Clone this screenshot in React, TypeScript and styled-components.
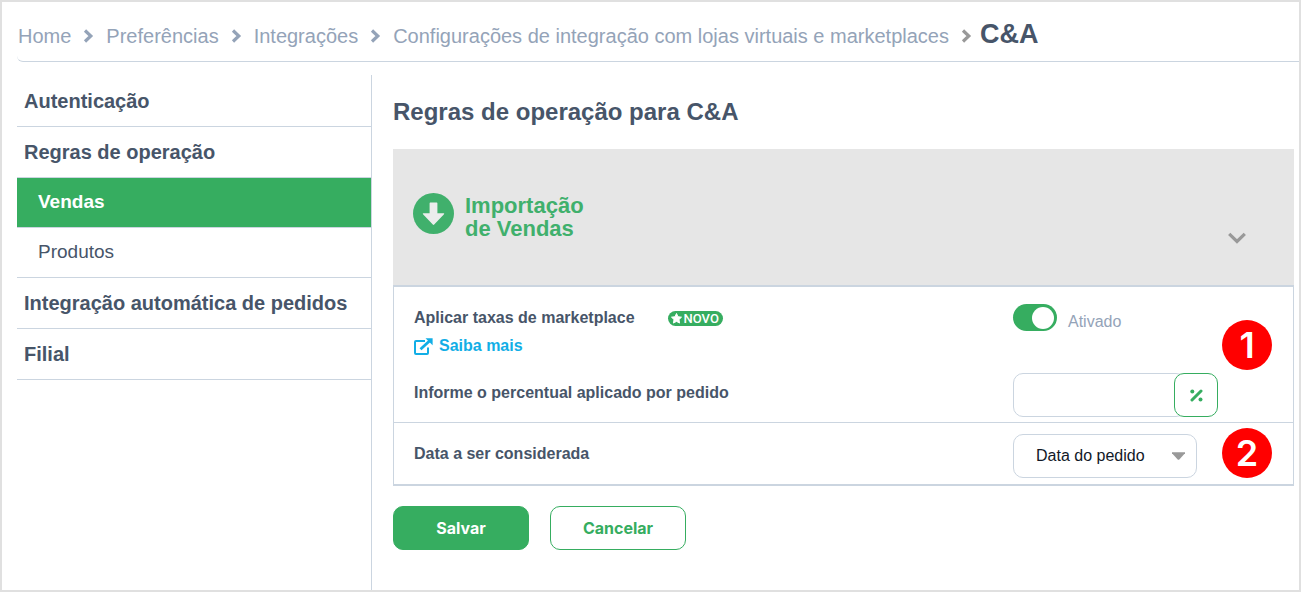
import React from "react";
import styled, { createGlobalStyle, css } from "styled-components";

const green = "#36ad60";
const slate = "#475569";
const muted = "#94a3b8";
const line = "#cbd5e0";

const GlobalStyle = createGlobalStyle`
  *, *::before, *::after { box-sizing: border-box; }
  body {
    margin: 0;
    background: #fff;
    color: ${slate};
    font-family: "Liberation Sans", Arial, sans-serif;
    font-size: 16px;
  }
  a { color: inherit; text-decoration: none; }
  ul, ol { list-style: none; margin: 0; padding: 0; }
  svg { display: block; flex: none; }
`;

const Page = styled.div`
  display: flex;
  flex-direction: column;
  min-height: 100vh;
  margin-right: 1px;
  padding-left: 15px;
  border: 2px solid #e0e0e0;
`;

const Header = styled.header`
  padding: 15px 0 7px 1px;
  border-bottom: 1px solid ${line};
  border-bottom-left-radius: 6px;
`;

const Crumbs = styled.ol`
  display: flex;
  align-items: baseline;
  color: ${muted};
  font-size: 20px;
  line-height: 35px;
  white-space: nowrap;
`;

const Crumb = styled.li`
  display: flex;
  align-items: baseline;
`;

const CrumbArrow = styled.span<{ $last?: boolean }>`
  margin: 0 ${(p) => (p.$last ? 8 : 12)}px 0 12px;
  color: ${(p) => (p.$last ? "#999" : muted)};
`;

const Current = styled.strong`
  color: ${slate};
  font-size: 27px;
`;

const Body = styled.div`
  display: flex;
  flex: 1;
  margin-top: 13px;
`;

const Sidebar = styled.nav`
  flex: none;
  width: 355px;
  padding-top: 1px;
  border-right: 1px solid ${line};
`;

const MenuLink = styled.a<{ $sub?: boolean; $active?: boolean }>`
  display: flex;
  align-items: center;
  height: 51px;
  padding-left: 7px;
  border-bottom: 1px solid ${line};
  font-size: 20px;
  font-weight: bold;
  ${(p) =>
    p.$sub &&
    css`
      height: 50px;
      padding: 0 0 2px 21px;
      font-size: 19px;
      font-weight: normal;
    `}
  ${(p) =>
    p.$active &&
    css`
      background: ${green};
      color: #fff;
      font-weight: bold;
    `}
`;

const Main = styled.main`
  flex: 1;
  min-width: 0;
  padding: 22px 5px 0 21px;
`;

const Title = styled.h1`
  margin: 0 0 22px;
  font-size: 24px;
  line-height: 30px;
`;

const PanelHeader = styled.div`
  display: flex;
  align-items: center;
  justify-content: space-between;
  height: 138px;
  padding: 0 48px 2px 20px;
  background: #e6e6e6;
  border-bottom: 2px solid ${line};
`;

const PanelTitle = styled.h2`
  display: flex;
  align-items: flex-start;
  gap: 11px;
  margin: 0;
  color: #40b06c;
  font-size: 22px;
  line-height: 23px;
`;

const TitleText = styled.span`
  padding-top: 1px;
`;

const Collapse = styled.button`
  align-self: flex-end;
  padding: 0;
  margin-bottom: 39px;
  border: 0;
  background: none;
  color: #999;
`;

const PanelBody = styled.div`
  border: solid ${line};
  border-width: 0 1px 2px;
`;

const Rule = styled.section<{ $roomy?: boolean }>`
  display: flex;
  align-items: center;
  padding: ${(p) => (p.$roomy ? "17px 21px 5px 20px" : "11px 21px 6px 20px")};

  & + & {
    border-top: 1px solid ${line};
  }
`;

const Fields = styled.div`
  flex: 1;
  display: flex;
  flex-direction: column;
  gap: 17px;
`;

const Field = styled.div`
  display: grid;
  grid-template-columns: 1fr 209px;
  align-items: center;
`;

const LabelLine = styled.div`
  display: flex;
  align-items: center;
  padding-bottom: 5px;
  line-height: 20px;
`;

const FeeText = styled.div`
  display: flex;
  flex-direction: column;
  gap: 3px;
  padding-top: 4px;
`;

const Label = styled.label`
  font-weight: bold;
`;

const NewBadge = styled.span`
  display: flex;
  align-items: center;
  gap: 2px;
  height: 15px;
  margin-left: 33px;
  padding: 0 4px 0 3px;
  border-radius: 8px;
  background: ${green};
  color: #fff;
  font: 500 13px/15px Roboto, sans-serif;
`;

const HelpLink = styled.a`
  display: flex;
  align-items: center;
  align-self: flex-start;
  gap: 6px;
  color: #12aee6;
  font-weight: bold;
  line-height: 20px;
`;

const SwitchLine = styled.div`
  display: flex;
  align-self: start;
  gap: 11px;
`;

const Switch = styled.input`
  appearance: none;
  width: 44px;
  height: 27px;
  margin: 0;
  padding: 3px;
  border-radius: 14px;
  background: #9ca3af;

  &::before {
    content: "";
    display: block;
    width: 22px;
    height: 22px;
    border-radius: 50%;
    background: #fff;
  }
  &:checked {
    background: ${green};
  }
  &:checked::before {
    margin-left: 16px;
  }
`;

const SwitchText = styled.label`
  padding-top: 8px;
  color: ${muted};
  line-height: 20px;
`;

const PercentGroup = styled.div`
  display: flex;
  width: 205px;
`;

const PercentInput = styled.input`
  flex: 1;
  min-width: 0;
  height: 44px;
  margin-right: -12px;
  padding: 0 22px 0 12px;
  border: 1px solid ${line};
  border-radius: 10px;
  font: inherit;
`;

const PercentButton = styled.button`
  position: relative;
  display: flex;
  align-items: center;
  justify-content: center;
  width: 44px;
  height: 44px;
  padding: 0;
  border: 1px solid ${green};
  border-radius: 10px;
  background: #fff;
  color: ${green};
`;

const SelectBox = styled.div`
  display: grid;
  align-items: center;
  width: 184px;

  & > * {
    grid-area: 1 / 1;
  }
  & > svg {
    justify-self: end;
    margin-right: 12px;
    pointer-events: none;
  }
`;

const Select = styled.select`
  appearance: none;
  width: 100%;
  height: 44px;
  padding: 0 30px 2px 22px;
  border: 1px solid ${line};
  border-radius: 10px;
  background: #fff;
  color: #111827;
  font: inherit;
`;

const Marker = styled.span<{ $raised?: boolean }>`
  display: flex;
  align-items: center;
  justify-content: center;
  flex: none;
  align-self: ${(p) => (p.$raised ? "flex-start" : "flex-end")};
  width: 50px;
  height: 50px;
  margin-top: ${(p) => (p.$raised ? 16 : -6)}px;
  border-radius: 50%;
  background: #f00;
  color: #fff;
  font: 600 36px/50px Inter, sans-serif;
`;

const Actions = styled.div`
  display: flex;
  gap: 21px;
  margin-top: 20px;
`;

const ActionButton = styled.button<{ $primary?: boolean }>`
  width: 136px;
  height: 44px;
  padding: 0;
  border: 1px solid ${green};
  border-radius: 10px;
  background: ${(p) => (p.$primary ? green : "#fff")};
  color: ${(p) => (p.$primary ? "#fff" : green)};
  font: bold 16px/20px Inter, sans-serif;
`;

const ChevronRight = () => (
  <svg width="11" height="14" viewBox="0 0 11 14" fill="none" aria-hidden="true">
    <path d="M2 1.5 7.8 7 2 12.5" stroke="currentColor" strokeWidth="3.2" />
  </svg>
);

const ChevronDown = () => (
  <svg width="18" height="12" viewBox="0 0 18 12" fill="none" aria-hidden="true">
    <path d="M1.2 1.8 9 9.4 16.8 1.8" stroke="currentColor" strokeWidth="3.2" />
  </svg>
);

const DownloadIcon = () => (
  <svg width="41" height="41" viewBox="0 0 41 41" aria-hidden="true">
    <circle cx="20.5" cy="20.5" r="20.5" fill="currentColor" />
    <path
      d="M17.3 9.6H23.7Q24.4 9.6 24.4 10.3V20.3H30.7Q31.6 20.3 31 21.2L21.2 31.6Q20.5 32.3 19.8 31.6L10 21.2Q9.4 20.3 10.3 20.3H16.6V10.3Q16.6 9.6 17.3 9.6Z"
      fill="#ebedec"
    />
  </svg>
);

const ExternalIcon = () => (
  <svg width="19" height="17" viewBox="0 0 19 17" fill="none" aria-hidden="true">
    <path d="M11 3H2Q1 3 1 4V15Q1 16 2 16H13Q14 16 14 15V9.5" stroke="currentColor" strokeWidth="2" />
    <path d="M6.5 11.3 15.5 3" stroke="currentColor" strokeWidth="2.8" />
    <path d="M11.5.2H18.6V7.3Z" fill="currentColor" />
  </svg>
);

const StarIcon = () => (
  <svg width="11" height="11" viewBox="0 0 24 24" fill="currentColor" aria-hidden="true">
    <path
      d="M12 1l3.4 7 7.6 1.1-5.5 5.3 1.3 7.6L12 18.4 5.2 22l1.3-7.6L1 9.1 8.6 8z"
      stroke="currentColor"
      strokeWidth="2"
      strokeLinejoin="round"
    />
  </svg>
);

const PercentIcon = () => (
  <svg width="13" height="13" viewBox="0 0 13 13" fill="currentColor" aria-hidden="true">
    <circle cx="2.3" cy="2.5" r="2" />
    <circle cx="10.5" cy="10.5" r="2" />
    <path d="M2 11 11 2" stroke="currentColor" strokeWidth="3" strokeLinecap="round" />
  </svg>
);

const Caret = () => (
  <svg width="13" height="8" viewBox="0 0 13 8" aria-hidden="true">
    <path d="M0 .3H13V1.2L7.3 7.4Q6.5 8 5.7 7.4L0 1.2Z" fill="#999" />
  </svg>
);

const crumbs = [
  "Home",
  "Preferências",
  "Integrações",
  "Configurações de integração com lojas virtuais e marketplaces",
];

const menu = [
  { text: "Autenticação" },
  { text: "Regras de operação" },
  { text: "Vendas", sub: true, active: true },
  { text: "Produtos", sub: true },
  { text: "Integração automática de pedidos" },
  { text: "Filial" },
];

export default function App() {
  return (
    <>
      <GlobalStyle />
      <Page>
        <Header>
          <Crumbs>
            {crumbs.map((text, i) => (
              <Crumb key={text}>
                <a href="#">{text}</a>
                <CrumbArrow $last={i === crumbs.length - 1}>
                  <ChevronRight />
                </CrumbArrow>
              </Crumb>
            ))}
            <Crumb aria-current="page">
              <Current>C&amp;A</Current>
            </Crumb>
          </Crumbs>
        </Header>
        <Body>
          <Sidebar>
            <ul>
              {menu.map((item) => (
                <li key={item.text}>
                  <MenuLink href="#" $sub={item.sub} $active={item.active}>
                    {item.text}
                  </MenuLink>
                </li>
              ))}
            </ul>
          </Sidebar>
          <Main>
            <Title>Regras de operação para C&amp;A</Title>
            <PanelHeader>
              <PanelTitle>
                <DownloadIcon />
                <TitleText>
                  Importação
                  <br />
                  de Vendas
                </TitleText>
              </PanelTitle>
              <Collapse type="button" aria-label="Recolher">
                <ChevronDown />
              </Collapse>
            </PanelHeader>
            <PanelBody>
              <Rule $roomy>
                <Fields>
                  <Field>
                    <FeeText>
                      <LabelLine>
                        <Label htmlFor="fees">Aplicar taxas de marketplace</Label>
                        <NewBadge>
                          <StarIcon />
                          NOVO
                        </NewBadge>
                      </LabelLine>
                      <HelpLink href="#">
                        <ExternalIcon />
                        Saiba mais
                      </HelpLink>
                    </FeeText>
                    <SwitchLine>
                      <Switch id="fees" type="checkbox" role="switch" defaultChecked />
                      <SwitchText htmlFor="fees">Ativado</SwitchText>
                    </SwitchLine>
                  </Field>
                  <Field>
                    <LabelLine>
                      <Label htmlFor="percent">Informe o percentual aplicado por pedido</Label>
                    </LabelLine>
                    <PercentGroup>
                      <PercentInput id="percent" type="text" />
                      <PercentButton type="button" aria-label="Percentual">
                        <PercentIcon />
                      </PercentButton>
                    </PercentGroup>
                  </Field>
                </Fields>
                <Marker $raised>1</Marker>
              </Rule>
              <Rule>
                <Fields>
                  <Field>
                    <LabelLine>
                      <Label htmlFor="date">Data a ser considerada</Label>
                    </LabelLine>
                    <SelectBox>
                      <Select id="date" defaultValue="pedido">
                        <option value="pedido">Data do pedido</option>
                      </Select>
                      <Caret />
                    </SelectBox>
                  </Field>
                </Fields>
                <Marker>2</Marker>
              </Rule>
            </PanelBody>
            <Actions>
              <ActionButton type="button" $primary>
                Salvar
              </ActionButton>
              <ActionButton type="button">Cancelar</ActionButton>
            </Actions>
          </Main>
        </Body>
      </Page>
    </>
  );
}
